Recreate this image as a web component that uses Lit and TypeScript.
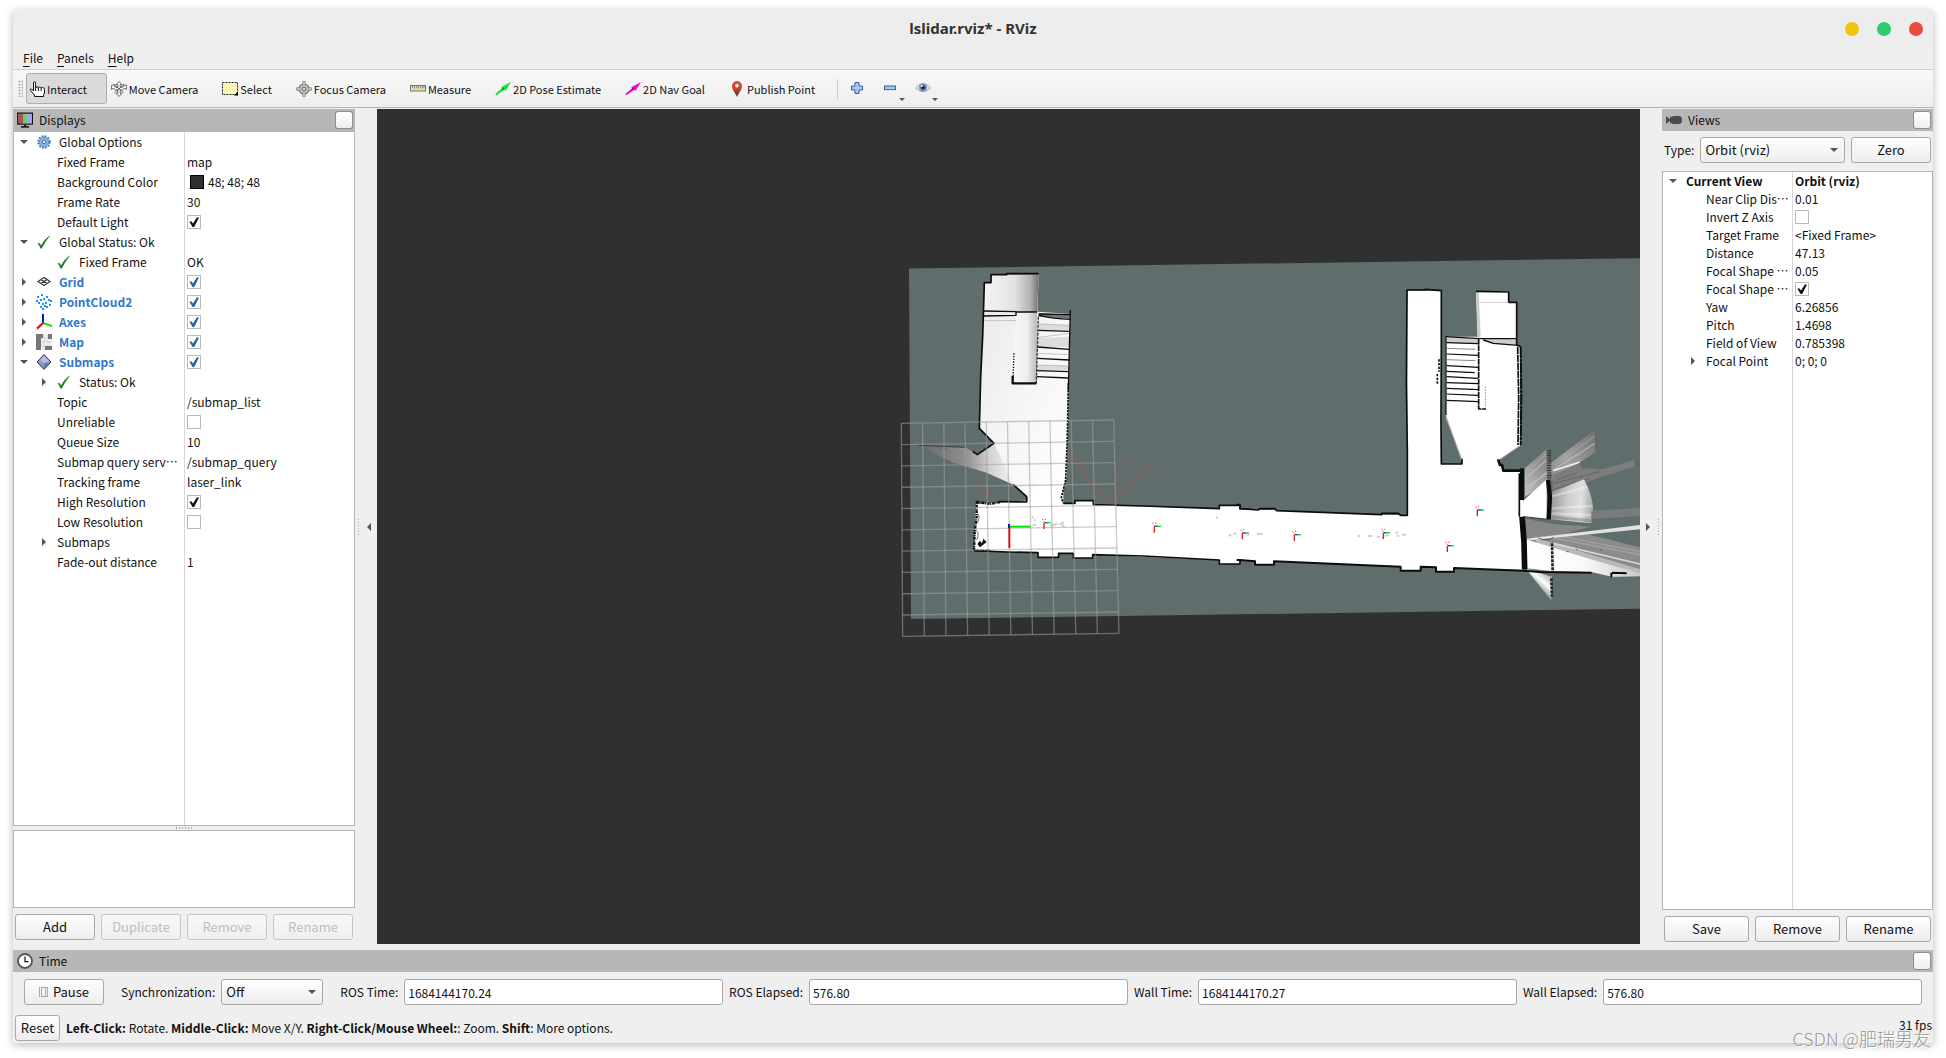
import { LitElement, html, css, svg, nothing } from "lit";
import { customElement, property } from "lit/decorators.js";

const sharedControls = css`
  * {
    box-sizing: border-box;
  }
  button,
  select,
  input {
    font: inherit;
    color: inherit;
    margin: 0;
  }
  .btn {
    height: 26px;
    padding: 0;
    border: 1px solid #a9a9a9;
    border-radius: 3px;
    background: linear-gradient(#fefefe, #ededed);
    color: #111;
    font-size: 13px;
    line-height: 20px;
  }
  .btn:disabled {
    border-color: #c6c6c6;
    color: #bebebe;
    background: linear-gradient(#f8f8f8, #efefef);
  }
  .select-wrap {
    position: relative;
    display: flex;
  }
  .select-wrap::after {
    content: "";
    position: absolute;
    right: 7px;
    top: 11px;
    border: 4px solid transparent;
    border-top-color: #555;
    border-bottom: 0;
    pointer-events: none;
  }
  .select-wrap select {
    appearance: none;
    flex: 1;
    height: 26px;
    padding: 0 20px 0 4px;
    border: 1px solid #a9a9a9;
    border-radius: 3px;
    background: linear-gradient(#fefefe, #ededed);
    font-size: 13px;
  }
`;

const ICONS: Record<string, unknown> = {
  hand: svg`<path d="M5.5 15.5 L5.5 14 L1.5 9.5 Q0.5 7.5 2.5 8 L4.5 10 L4.5 2 Q4.5 .6 5.5 .6 Q6.6 .6 6.6 2 L6.6 7 Q6.7 5.8 8 5.8 Q9.4 5.8 9.4 7.2 Q9.6 6 10.9 6 Q12.2 6 12.2 7.4 Q12.5 6.5 13.6 6.5 Q15.5 6.6 15.5 8.5 L15.5 12 L14.6 14 L14.6 15.5 Z" fill="#fff" stroke="#111"/><path d="M6.6 7V10M9.4 7V10M12.2 7.4V10" stroke="#111" fill="none"/>`,
  move: svg`<g fill="#fff" stroke="#555" stroke-width=".9"><path d="M8 .6L11 3.6H9.2V6.6Q11 6.6 12.6 5.4L12 3.6L15.8 4.6L15.4 8.4L13.8 7.4Q11.5 9 9.2 9.2V12.3H11L8 15.5L5 12.3H6.8V9.2Q4.5 9 2.2 7.4L.6 8.4L.2 4.6L4 3.6L3.4 5.4Q5 6.6 6.8 6.6V3.6H5Z"/><path d="M4 4.4Q8 8 12.5 11.5M12 4.4Q8 8 3.5 11.5" fill="none"/></g>`,
  select: svg`<rect x=".5" y="1.5" width="15" height="12" fill="#fdf6b6" stroke="#222" stroke-dasharray="2 1"/><path d="M16 10.5V14.5H12Z" fill="#000"/>`,
  focus: svg`<g fill="none" stroke="#777"><circle cx="8" cy="8" r="4.8" stroke-width="1.6"/><path d="M6.9 0H9.1V6.9H16V9.1H9.1V16H6.9V9.1H0V6.9H6.9Z" fill="#ddd" stroke-width=".8"/><circle cx="8" cy="8" r="1.8"/></g>`,
  measure: svg`<rect x=".5" y="4.5" width="15" height="5.5" fill="#e9dca6" stroke="#777"/><path d="M2.5 5v2M4.5 5v2.6M6.5 5v2M8.5 5v2.6M10.5 5v2M12.5 5v2.6M14 5v2" stroke="#777" stroke-width=".8"/>`,
  pose: svg`<path d="M.3 13 L7 7.3 L6.2 6.2 L16 1 L10.4 10 L9.3 8.8 L1.4 14.2Z" fill="#0fe52a"/><path d="M6.4 8.6L9.4 8.5L8 6.8Z" fill="#077a14"/>`,
  nav: svg`<path d="M.3 13 L7 7.3 L6.2 6.2 L16 1 L10.4 10 L9.3 8.8 L1.4 14.2Z" fill="#f10bd2"/><path d="M6.4 8.6L9.4 8.5L8 6.8Z" fill="#7a076c"/>`,
  pin: svg`<defs><linearGradient id="pin" x2="0" y2="1"><stop offset="0" stop-color="#e2552f"/><stop offset=".5" stop-color="#c0432a"/><stop offset="1" stop-color="#4f2d1c"/></linearGradient></defs><path d="M8 16 C6.5 12 3 9 3 5 A5 5 0 0 1 13 5 C13 9 9.5 12 8 16Z" fill="url(#pin)"/><circle cx="8" cy="4.8" r="1.8" fill="#fff"/>`,
  plus: svg`<path d="M6 2.5H10V6H13.5V10H10V13.5H6V10H2.5V6H6Z" fill="#a9c5e8" stroke="#3465a4"/>`,
  minus: svg`<rect x="2.5" y="6" width="11" height="3.6" fill="#a9c5e8" stroke="#3465a4"/>`,
  eye: svg`<path d="M.5 8 Q8 -1 15.5 8 Q8 15.5 .5 8Z" fill="#e6e6e6" stroke="#aaa"/><circle cx="8" cy="7.6" r="4" fill="#7d8bc0"/><circle cx="8" cy="7.6" r="2" fill="#1b2244"/><circle cx="6.8" cy="6" r="1" fill="#fff"/>`,
  monitor: svg`<rect x=".8" y="1.2" width="14.6" height="10.8" fill="#ddd" stroke="#111" stroke-width="1.4"/><rect x="1.4" y="1.8" width="4.6" height="9.6" fill="#a55757"/><rect x="6" y="1.8" width="4.6" height="9.6" fill="#73c677"/><rect x="10.6" y="1.8" width="4.2" height="9.6" fill="#a6a4e6"/><path d="M7 12.5h2.2v1.6h2.8v1.6H4v-1.6h3z" fill="#222"/>`,
  camera: svg`<path d="M0 4L4 7.3V4.5H5V5.5Q6 4 8 4H13Q16 4 16 8Q16 12 13 12H8Q6 12 5 10.5V11.5H4V8.7L0 12Z" fill="#4c4c4c"/>`,
  clock: svg`<circle cx="8" cy="8" r="7" fill="#fff" stroke="#555" stroke-width="1.8"/><path d="M8 3.5V8.6H11.5" fill="none" stroke="#111" stroke-width="1.2"/>`,
  gear: svg`<circle cx="8" cy="8" r="5.8" fill="none" stroke="#3f73b5" stroke-width="1.8" stroke-dasharray="1.8 1.24"/><circle cx="8" cy="8" r="4.7" fill="#8fb4e0" stroke="#5a89c6"/><circle cx="8" cy="8" r="1.8" fill="#dce8f7" stroke="#3f73b5"/>`,
  check: svg`<path d="M1.5 9.6 Q3.6 8 5 11.5 Q8.5 5 14.6 1 Q9.2 7.5 5.8 14.4 L4.4 14.4 Q3.5 11 1.5 9.6Z" fill="#1f7a25"/>`,
  grid: svg`<path d="M2 7.5L8 3.5L14 7.5L8 11.5ZM4.8 5.5L11 9.5M11 5.5L4.8 9.5" fill="none" stroke="#3c3c3c" stroke-width="1.3"/>`,
  cloud: svg`<g fill="#1e90ff">${[[5, 0], [1, 2], [10, 2], [0, 6], [4, 5], [7, 4], [12, 5], [14, 6], [2, 8], [6, 9], [9, 8], [13, 10], [4, 12], [8, 11], [6, 14], [10, 12]].map(([x, y]) => svg`<rect x=${x} y=${y} width="2" height="2"/>`)}</g>`,
  axes: svg`<path d="M7 9V0" stroke="#0b12d8" stroke-width="2"/><path d="M7 9L16 12" stroke="#10e010" stroke-width="2"/><path d="M7 9L1 14.6" stroke="#e01010" stroke-width="2.2"/>`,
  map: svg`<rect width="16" height="16" fill="#f2f2f2"/><path d="M0 4H16M0 8H16M0 12H16M4 0V16M8 0V16M12 0V16" stroke="#c4c4c4" stroke-width=".6"/><path d="M0 0H7V4H5V16H0ZM12 0H16V5H12ZM9 12H16V16H9Z" fill="#777"/>`,
  diamond: svg`<path d="M8 .6L15 8L8 15.4L1 8Z" fill="#8b9ac2" stroke="#27304f"/><path d="M8 1.5L13.8 8L8 9.4L4 6Z" fill="#b3bedb"/><path d="M8 14.5V9L14 8Z" fill="#6a7bab"/>`,
};

const icon = (name: string) =>
  html`<svg class="icon" viewBox="0 0 16 16" width="16" height="16" aria-hidden="true">${ICONS[name]}</svg>`;

interface Row {
  depth: number;
  label: string;
  arrow?: "open" | "closed";
  icon?: string;
  value?: string;
  check?: boolean;
  swatch?: boolean;
  tone?: "display" | "strong";
}

const DISPLAY_ROWS: Row[] = [
  { depth: 0, label: "Global Options", arrow: "open", icon: "gear" },
  { depth: 1, label: "Fixed Frame", value: "map" },
  { depth: 1, label: "Background Color", value: "48; 48; 48", swatch: true },
  { depth: 1, label: "Frame Rate", value: "30" },
  { depth: 1, label: "Default Light", check: true },
  { depth: 0, label: "Global Status: Ok", arrow: "open", icon: "check" },
  { depth: 1, label: "Fixed Frame", icon: "check", value: "OK" },
  { depth: 0, label: "Grid", arrow: "closed", icon: "grid", check: true, tone: "display" },
  { depth: 0, label: "PointCloud2", arrow: "closed", icon: "cloud", check: true, tone: "display" },
  { depth: 0, label: "Axes", arrow: "closed", icon: "axes", check: true, tone: "display" },
  { depth: 0, label: "Map", arrow: "closed", icon: "map", check: true, tone: "display" },
  { depth: 0, label: "Submaps", arrow: "open", icon: "diamond", check: true, tone: "display" },
  { depth: 1, label: "Status: Ok", arrow: "closed", icon: "check" },
  { depth: 1, label: "Topic", value: "/submap_list" },
  { depth: 1, label: "Unreliable", check: false },
  { depth: 1, label: "Queue Size", value: "10" },
  { depth: 1, label: "Submap query service", value: "/submap_query" },
  { depth: 1, label: "Tracking frame", value: "laser_link" },
  { depth: 1, label: "High Resolution", check: true },
  { depth: 1, label: "Low Resolution", check: false },
  { depth: 1, label: "Submaps", arrow: "closed" },
  { depth: 1, label: "Fade-out distance", value: "1" },
];

const VIEW_ROWS: Row[] = [
  { depth: 0, label: "Current View", arrow: "open", value: "Orbit (rviz)", tone: "strong" },
  { depth: 1, label: "Near Clip Distance", value: "0.01" },
  { depth: 1, label: "Invert Z Axis", check: false },
  { depth: 1, label: "Target Frame", value: "<Fixed Frame>" },
  { depth: 1, label: "Distance", value: "47.13" },
  { depth: 1, label: "Focal Shape Size", value: "0.05" },
  { depth: 1, label: "Focal Shape Fixed Size", check: true },
  { depth: 1, label: "Yaw", value: "6.26856" },
  { depth: 1, label: "Pitch", value: "1.4698" },
  { depth: 1, label: "Field of View", value: "0.785398" },
  { depth: 1, label: "Focal Point", arrow: "closed", value: "0; 0; 0" },
];

@customElement("property-tree")
class PropertyTree extends LitElement {
  @property({ attribute: false }) rows: Row[] = [];
  @property() kind = "displays";

  static styles = [
    sharedControls,
    css`
      :host {
        display: flex;
        flex-direction: column;
        background: #fff;
        border: 1px solid #b4b4b4;
        overflow: hidden;
      }
      .tree {
        --row: 20px;
        --name: 171px;
        --start: 2px;
        --end: 6px;
        flex: 1;
        display: flex;
        flex-direction: column;
        background: linear-gradient(#d8d8d8, #d8d8d8) calc(var(--name) - 1px) 0 / 1px 100% no-repeat;
      }
      .views {
        --row: 18px;
        --name: 130px;
        --end: 3px;
      }
      .row {
        display: grid;
        grid-template-columns: var(--name) 1fr;
        height: var(--row);
        align-items: center;
        line-height: var(--row);
      }
      .name {
        display: flex;
        align-items: center;
        min-width: 0;
        padding: 0 var(--end) 0 var(--start);
      }
      .depth1 {
        padding-left: calc(var(--start) + 20px);
      }
      .twist {
        flex: none;
        width: 20px;
        height: 16px;
        display: flex;
        align-items: center;
        padding-left: 4px;
      }
      .open::before,
      .closed::before {
        content: "";
        border: 4px solid transparent;
      }
      .open::before {
        border-top-color: #555;
        border-bottom: 0;
      }
      .closed::before {
        margin-left: 2px;
        border-left-color: #555;
        border-right: 0;
      }
      .icon {
        flex: none;
        margin-right: 7px;
      }
      .text {
        overflow: hidden;
        text-overflow: ellipsis;
        white-space: nowrap;
      }
      .plain {
        padding-left: 1px;
      }
      .value {
        display: flex;
        align-items: center;
        padding-left: 2px;
        white-space: nowrap;
      }
      .display .text {
        color: #3577c8;
        font-weight: 700;
      }
      .strong {
        font-weight: 700;
      }
      .swatch {
        width: 14px;
        height: 14px;
        margin: 0 4px 0 3px;
        background: #303030;
        border: 1px solid #000;
      }
      .box {
        appearance: none;
        width: 14px;
        height: 14px;
        border: 1px solid #b9b9b9;
        background: #fff;
        display: grid;
        place-items: center;
      }
      .box:checked::before {
        content: "";
        width: 10px;
        height: 10px;
        background: #111;
        clip-path: polygon(4% 48%, 22% 42%, 40% 66%, 78% 4%, 100% 4%, 52% 100%, 36% 100%);
      }
      .display .box:checked::before {
        background: #1f63ae;
      }
    `,
  ];

  render() {
    return html`<div class="tree ${this.kind}" role="tree">
      ${this.rows.map(
        (r, i) => html`<div class="row ${r.tone ?? ""}" role="treeitem">
          <div class="name depth${r.depth}">
            <span class="twist ${r.arrow ?? ""}"></span>
            ${r.icon ? icon(r.icon) : nothing}
            <label class="text ${r.icon ? "" : "plain"}" for="p${i}">${r.label}</label>
          </div>
          <div class="value">
            ${r.check === undefined
              ? nothing
              : html`<input id="p${i}" class="box" type="checkbox" .checked=${r.check} />`}
            ${r.swatch ? html`<span class="swatch"></span>` : nothing}${r.value ?? nothing}
          </div>
        </div>`,
      )}
    </div>`;
  }
}

const AXES_LEFT = [[462, 818], [793, 829], [1057, 849]];
const AXES_RIGHT = [[163, 854], [430, 848], [622, 887], [712, 780]];

const marker = ([x, y]: number[]) => svg`<g transform="translate(${x} ${y})">
  <path d="M0 0V19" stroke="#e01c1c" stroke-width="4"/>
  <path d="M2 0H12" stroke="#1b2bd0" stroke-width="4"/>
  <path d="M8 0H20" stroke="#12d812" stroke-width="4"/>
  <path d="M-6 -9h4M2 -10h4M-2 -3h4" stroke="#e55" stroke-width="3"/>
</g>`;

@customElement("map-view")
class MapView extends LitElement {
  static styles = css`
    :host {
      display: block;
      background: #303030;
      overflow: hidden;
      position: relative;
    }
    .scene {
      position: absolute;
      inset: 0;
      width: 100%;
      height: 100%;
    }
  `;

  render() {
    const cols = Array.from({ length: 11 }, (_, i) => i);
    return html`<svg class="scene" viewBox="377 109 1263 836" preserveAspectRatio="xMinYMin slice" role="img" aria-label="Map">
      <defs>
        <linearGradient id="tower" x1="0" x2="1" y1="0" y2="0">
          <stop offset="0" stop-color="#f4f4f4" /><stop offset=".55" stop-color="#e3e3e3" />
          <stop offset=".85" stop-color="#b2b2b2" /><stop offset="1" stop-color="#717171" />
        </linearGradient>
        <linearGradient id="room" x1="0" y1="0" x2="1" y2="1">
          <stop offset="0" stop-color="#e9e9e9" /><stop offset=".5" stop-color="#f5f5f5" /><stop offset="1" stop-color="#fff" />
        </linearGradient>
        <linearGradient id="well" x1="0" x2="1" y1="0" y2="0">
          <stop offset="0" stop-color="#f8f8f8" /><stop offset=".6" stop-color="#eee" /><stop offset="1" stop-color="#b9b9b9" />
        </linearGradient>
        <linearGradient id="beam" gradientUnits="userSpaceOnUse" x1="80" y1="620" x2="370" y2="600">
          <stop offset="0" stop-color="#666" /><stop offset=".5" stop-color="#8e8e8e" />
          <stop offset=".75" stop-color="#d2d2d2" /><stop offset="1" stop-color="#f6f6f6" />
        </linearGradient>
        <linearGradient id="fan" gradientUnits="userSpaceOnUse" x1="155" y1="300" x2="282" y2="310">
          <stop offset="0" stop-color="#9a9a9a" /><stop offset=".4" stop-color="#cfcfcf" />
          <stop offset=".7" stop-color="#e0e0e0" /><stop offset="1" stop-color="#9da2a1" />
        </linearGradient>
        <linearGradient id="ray" gradientUnits="userSpaceOnUse" x1="75" y1="270" x2="290" y2="120">
          <stop offset="0" stop-color="#bdbdbd" /><stop offset=".35" stop-color="#8a8a8a" />
          <stop offset=".6" stop-color="#a2a2a2" /><stop offset="1" stop-color="#767676" />
        </linearGradient>
        <linearGradient id="low" gradientUnits="userSpaceOnUse" x1="80" y1="0" x2="420" y2="0">
          <stop offset="0" stop-color="#fff" /><stop offset=".5" stop-color="#fafafa" /><stop offset="1" stop-color="#c8c8c8" />
        </linearGradient>
        <linearGradient id="flap" gradientUnits="userSpaceOnUse" x1="105" y1="560" x2="140" y2="520">
          <stop offset="0" stop-color="#8a8a8a" /><stop offset=".5" stop-color="#fff" /><stop offset="1" stop-color="#b5b5b5" />
        </linearGradient>
      </defs>

      <path d="M909 268.5L1650 258V608.5L911 619Z" fill="#5f6e6c" />

      <g transform="translate(890 250) scale(.33333)">
        <g fill="#6f6868">
          <path d="M650 762L532 622L540 592L560 622L652 745Z" />
          <path d="M652 760L692 620H702L664 745L708 618H716L672 735L788 624L797 629L690 745L820 626L828 634L670 762Z" fill-opacity=".85" />
          <path d="M252 682L262 684L325 750H305L250 720V708L290 730Z" />
        </g>
        <path d="M80 584L225 592L262 614L312 580L450 640L410 740L370 704L290 668L190 638Z" fill="url(#beam)" />
        <path d="M284 98L304 98V74H446L442 185L541 192L535 460L530 680L515 745H410V738L370 704L340 640L312 580L268 535L272 380L281 196Z" fill="url(#room)" />
        <path d="M284 98L304 98V74H446L441 188L282 184Z" fill="url(#tower)" />
        <path d="M380 186H441V402H367L372 310Z" fill="url(#well)" />
        <path d="M446 190L541 194V206L446 200Z" fill="#777" />
        <path d="M446 222L538 226V240L446 240ZM445 264L537 260V290L443 292ZM443 345L536 348V360H443Z" fill="#dcdcdc" />
        <path d="M258 762L410 752L440 700H520V758L555 762V752H610V764L988 776V766H1050V778L1060 780V930H1050V942H988V930L610 914V924H550V910H506V922H444V908L252 902Z" fill="#fff" />
        <g fill="none" stroke="#0c0c0c" stroke-width="5" stroke-linejoin="round">
          <path d="M268 538L272 380L278 260L283 98H303V74H350V71H446" />
          <path d="M282 183L380 185M282 198L378 196V186H441" stroke-width="4" />
          <path d="M446 192L541 194M446 196Q490 206 541 208M446 241L540 244M443 291L538 298M443 325L538 330M441 362L537 365M440 380L534 384" stroke-width="4" />
          <path d="M445 200L439 400" stroke="#333" stroke-width="4" stroke-dasharray="9 3" />
          <path d="M439 400H368V378" stroke-width="7" />
          <path d="M372 310L369 385" stroke-width="4" stroke-dasharray="4 4" />
          <path d="M541 180L538 300L535 420" stroke-width="4" />
          <path d="M535 400L532 560L527 690L514 742L520 760" stroke-dasharray="7 3" />
          <path d="M268 535L312 580L262 614L248 604M370 704L410 740V756L330 755" />
          <path d="M330 756L300 762L260 756V800L254 850L252 902H300" stroke-width="7" stroke-dasharray="8 3 3 2" />
          <path d="M85 586L225 592" stroke="#3b3b3b" stroke-width="3" />
          <path d="M145 590L155 600M160 592L172 602" stroke="#444" stroke-width="2" />
          <path d="M520 760H555V752H610V764L760 768L988 776V766H1050V778H1080" />
          <path d="M252 902L350 906L444 908V922H506V910H550V924H608V914L760 918L988 930V942H1050V930H1080" />
          <path d="M282 212H378M447 222L538 226M447 262L537 250M443 310L537 314M443 345L537 348" stroke="#aaa" stroke-width="2" />
        </g>
        <path d="M262 882L270 872L276 880L280 866L290 876L270 892Z" fill="#111" />
        <path d="M262 790Q272 800 262 820M258 840Q270 850 260 870" fill="none" stroke="#333" stroke-width="2" />
        <path d="M425 800l6 5M432 812l6-2M428 826l10-3M480 828l12-4M492 826l10-6M508 824l12-4M512 818h10M516 828h8M1016 858l8-4M1030 852l8-2M980 800l2 6" stroke="#d2d2d2" stroke-width="6" />
      </g>

      <g transform="translate(1500 400) scale(.33333)">
        <path d="M75 205L142 145L148 192L285 90L289 155L160 238L75 290Z" fill="url(#ray)" />
        <path d="M76 235L140 180M76 262L285 130M90 262L140 215" stroke="#c4c4c4" stroke-width="5" opacity=".6" />
        <path d="M76 222L140 160M150 208L284 108" stroke="#b0b0b0" stroke-width="4" opacity=".5" />
        <path d="M158 225L242 188L250 205L310 208L408 178V198L158 278Z" fill="#7d7d7d" />
        <path d="M160 212L240 186" stroke="#eee" stroke-width="5" />
        <path d="M160 250L300 215M170 240L230 218M162 268L270 235" stroke="#5a5a5a" stroke-width="2" />
        <path d="M152 278L252 238Q280 290 279 330L274 370L150 358Z" fill="url(#fan)" />
        <path d="M155 290L262 260M155 340L276 345M155 325L278 318" stroke="#fff" stroke-width="7" opacity=".35" />
        <path d="M155 352L276 362" stroke="#858585" stroke-width="9" opacity=".6" />
        <path d="M274 332L420 324V348L274 357Z" fill="#7b7b7b" />
        <path d="M76 356L160 372L270 380L200 400L80 418Z" fill="#858686" />
        <path d="M78 418L150 402L250 400L420 442V530L335 532L330 520L160 515L80 508Z" fill="#8b8b8b" />
        <path d="M100 412L420 508V522L120 440Z" fill="#b9b9b9" />
        <path d="M150 412L420 464M180 408L420 455" stroke="#9e9e9e" stroke-width="5" />
        <path d="M160 430L420 492" stroke="#d9d9d9" stroke-width="5" />
        <path d="M78 416L420 375V388L90 421Z" fill="#e2e2e2" />
        <path d="M78 418L150 440L300 486L420 520V528L335 530L275 516L160 514L80 505Z" fill="url(#low)" />
        <path d="M115 414Q140 426 162 412M200 455h6M228 448h5M300 450h4" fill="none" stroke="#333" stroke-width="2" />
        <path d="M78 506L156 530L154 602Z" fill="url(#flap)" />
        <path d="M72 300L140 238V358L62 350V320Z" fill="#fff" />
      </g>

      <g transform="translate(1240 250) scale(.33333)">
        <path d="M-10 778L55 780H105L425 794L502 796V122H604V642H666V628L618 505V260H714L708 124H806V156H830V284L840 290V588L776 630L790 660L850 664V960L642 955V966H585V952H542V962H482V950L102 934V944H45V932H-10Z" fill="#fff" />
        <path d="M618 262L715 266L716 282L618 278ZM730 268L830 268V285L760 280Z" fill="#ccc" />
        <path d="M708 126H716L722 262H712Z" fill="#ccc" />
        <g fill="none" stroke="#0c0c0c" stroke-width="5" stroke-linejoin="round">
          <path d="M-10 764H0V776L55 780L60 776H105L110 782L425 794V790H475L482 796H502V600L499 400L501 120H556V118L604 122V260L603 520L604 642H666V626" />
          <path d="M708 124L806 126V157H830V284L842 290" />
          <path d="M833 290L836 440L834 585" stroke-width="5" stroke-dasharray="22 2" />
          <path d="M842 290L844 440L842 585" stroke-width="6" stroke-dasharray="34 2 9 2" />
          <path d="M714 157H806" stroke="#bbb" stroke-width="2" />
          <path d="M616 260L720 266H830M730 270L760 280L835 286" stroke-width="4" />
          <path d="M618 262V495" stroke="#222" stroke-width="4" />
          <path d="M618 498L664 628M838 588L780 628" stroke="#aaa" stroke-width="3" />
          <path d="M620 278L714 281M620 312L716 316M620 347L716 352M620 364L704 368M620 380L714 385M620 398L716 401M620 415L716 419M620 432L714 436M620 451L716 455" stroke-width="3.5" />
          <path d="M620 295L706 298M620 329L706 332" stroke="#888" stroke-width="3" />
          <path d="M716 266V477H738" stroke-dasharray="18 2" />
          <path d="M736 410V475" stroke="#555" stroke-width="3" stroke-dasharray="3 6" />
          <path d="M597 328V365M592 372V405" stroke-width="5" stroke-dasharray="7 4" />
          <path d="M774 628L780 645H786L790 662H850" stroke-width="8" />
          <path d="M846 655V750" stroke-width="12" />
          <path d="M838 670V800" stroke-width="5" />
          <path d="M846 800L852 875L854 958" stroke-width="17" />
          <path d="M926 600L928 690" stroke="#3a3a3a" stroke-width="14" stroke-dasharray="3 2" />
          <path d="M924 690L930 740L926 808" stroke-width="13" />
          <path d="M850 800L925 808" stroke="#333" stroke-width="3" />
          <path d="M936 880L938 965M934 985L936 1040" stroke="#222" stroke-width="8" stroke-dasharray="9 3" />
          <path d="M1068 540V604M1020 638L1028 655M1186 628V650" stroke="#666" stroke-width="5" />
          <path d="M-10 930H0L45 934V944H102V934L482 950V962H542V950L588 952V965H642V954L850 962L900 966L1055 968M1114 968V982M1116 968L1160 970" stroke-width="6" />
        </g>
        <path d="M20 856l8-2M50 852h18M352 858h8M385 858h12M410 860h10M434 858l14-3M466 850l8-4M470 858h8M486 854h12" stroke="#d2d2d2" stroke-width="6" />
        ${AXES_RIGHT.map(marker)}
      </g>

      <g transform="translate(890 250) scale(.33333)">
        <g stroke="#a0a0a0" stroke-opacity=".55" stroke-width="4" fill="none">
          ${cols.map((i) => {
            const t = i / 10;
            return svg`<path d="M${34 + 637 * t} ${520 - 10 * t}L${38 + 649 * t} ${1159 - 9 * t}"/>
              <path d="M${34 + 4 * t} ${520 + 639 * t}L${671 + 16 * t} ${510 + 640 * t}"/>`;
          })}
        </g>
        ${AXES_LEFT.map(marker)}
        <path d="M358 832V894" stroke="#e01010" stroke-width="6" />
        <path d="M360 830H422" stroke="#05e505" stroke-width="6" />
        <path d="M357 822V834" stroke="#0a14d0" stroke-width="6" />
      </g>
    </svg>`;
  }
}

const TOOLS = [
  ["hand", "Interact"],
  ["move", "Move Camera"],
  ["select", "Select"],
  ["focus", "Focus Camera"],
  ["measure", "Measure"],
  ["pose", "2D Pose Estimate"],
  ["nav", "2D Nav Goal"],
  ["pin", "Publish Point"],
];

const TIMES = [
  ["ROS Time:", "1684144170.24"],
  ["ROS Elapsed:", "576.80"],
  ["Wall Time:", "1684144170.27"],
  ["Wall Elapsed:", "576.80"],
];

@customElement("app-root")
class AppRoot extends LitElement {
  static styles = [
    sharedControls,
    css`
      :host {
        display: block;
        min-height: 100vh;
        box-sizing: border-box;
        padding: 10px 13px 15px;
        background: #fff;
        color: #111;
        font: 12px/20px "Noto Sans CJK SC", "Noto Sans", sans-serif;
      }
      .window {
        position: relative;
        display: flex;
        flex-direction: column;
        height: calc(100vh - 25px);
        background: #efefef;
        border-radius: 4px 4px 0 0;
        box-shadow: 0 2px 9px rgba(0, 0, 0, 0.28);
      }
      .titlebar {
        display: grid;
        grid-template-columns: 1fr auto 1fr;
        align-items: center;
        height: 36px;
        padding: 2px 10px 0;
        background: #ededed;
        border-radius: 4px 4px 0 0;
        flex: none;
      }
      .title {
        grid-column: 2;
        margin: 0;
        padding-bottom: 2px;
        font: 700 15px/20px "Noto Sans", sans-serif;
        color: #333;
      }
      .dots {
        display: flex;
        justify-content: flex-end;
        gap: 18px;
      }
      .dot {
        width: 14px;
        height: 14px;
        padding: 0;
        border: 0;
        border-radius: 50%;
      }
      .min { background: #f1c40f; }
      .max { background: #2ecc71; }
      .close { background: #e84c3d; }
      .menubar {
        display: flex;
        gap: 14px;
        height: 24px;
        padding: 0 10px;
        border-bottom: 1px solid #cfcfcf;
        flex: none;
      }
      .menubar a {
        color: inherit;
        text-decoration: none;
        line-height: 24px;
      }
      .menubar u {
        text-underline-offset: 3px;
      }
      .toolbar {
        display: flex;
        align-items: center;
        height: 38px;
        padding-left: 5px;
        background: linear-gradient(#f8f8f8, #eee);
        border-bottom: 1px solid #b4b4b4;
        flex: none;
      }
      .grip {
        width: 5px;
        height: 17px;
        margin-right: 3px;
        background: radial-gradient(#b5b5b5 45%, transparent 50%) 0 0 / 3px 3px;
      }
      .tool {
        display: flex;
        align-items: center;
        gap: 2px;
        height: 31px;
        margin-right: 1px;
        padding: 0 19px 0 2px;
        border: 1px solid transparent;
        border-radius: 3px;
        background: none;
        font-size: 11px;
        white-space: nowrap;
      }
      .active {
        background: #dadada;
        border-color: #adadad;
      }
      .sep {
        width: 1px;
        height: 20px;
        margin: 0 11px 0 1px;
        background: #ccc;
      }
      .mini {
        display: flex;
        position: relative;
        width: 33px;
        height: 24px;
        padding: 3px 0;
        border: 0;
        background: none;
      }
      .more::after {
        content: "";
        position: absolute;
        left: 17px;
        bottom: 0;
        border: 3px solid transparent;
        border-top-color: #555;
        border-bottom: 0;
      }
      .main {
        flex: 1;
        min-height: 0;
        display: grid;
        grid-template-columns: 342px 22px minmax(0, 1fr) 22px 271px;
        padding-top: 1px;
      }
      .dock {
        display: flex;
        flex-direction: column;
        min-height: 0;
      }
      .dock-head {
        display: flex;
        align-items: center;
        gap: 6px;
        flex: none;
        height: 22px;
        padding: 0 2px 0 4px;
        background: #b7b7b7;
      }
      .dock-head h2 {
        flex: 1;
        margin: 0;
        font: inherit;
      }
      .float {
        width: 18px;
        height: 18px;
        padding: 0;
        border: 1px solid #8d8d8d;
        border-radius: 3px;
        background: linear-gradient(#fff, #eee);
      }
      property-tree {
        flex: 1;
        min-height: 0;
      }
      .hgrip {
        flex: none;
        width: 18px;
        height: 4px;
        margin: 0 auto;
        background: radial-gradient(#aaa 45%, transparent 50%) 0 0 / 3px 4px;
      }
      .help {
        flex: none;
        width: 100%;
        height: 78px;
        resize: none;
        border: 1px solid #b4b4b4;
        background: #fff;
      }
      .buttons {
        display: grid;
        grid-auto-flow: column;
        grid-auto-columns: 1fr;
        gap: 6px;
        padding: 6px 2px 4px;
      }
      .views .buttons {
        padding-bottom: 2px;
      }
      .view-type {
        display: grid;
        grid-template-columns: auto 1fr 80px;
        align-items: center;
        gap: 6px;
        padding: 6px 2px 8px;
      }
      .splitter {
        display: flex;
        align-items: center;
        justify-content: center;
        padding: 0;
        border: 0;
        background: none;
      }
      .splitter::before {
        content: "";
        border: 4px solid transparent;
      }
      .splitter::after {
        content: "";
        width: 1px;
        height: 16px;
        background: repeating-linear-gradient(#aaa 0 1px, transparent 1px 3px);
      }
      .to-left {
        flex-direction: row-reverse;
        gap: 8px;
        padding-right: 3px;
      }
      .to-left::before {
        border-right-color: #555;
        border-left: 0;
      }
      .to-right {
        gap: 8px;
        padding-left: 3px;
      }
      .to-right::before {
        border-left-color: #555;
        border-right: 0;
      }
      .time {
        margin-top: 6px;
        flex: none;
      }
      .time-row {
        display: flex;
        align-items: center;
        gap: 6px;
        padding: 7px 11px;
        white-space: nowrap;
      }
      .pause {
        width: 80px;
        margin-right: 11px;
      }
      .pause-icon {
        display: inline-block;
        width: 9px;
        height: 10px;
        margin-right: 5px;
        border: 1px solid #aaa;
        border-width: 1px 3px;
        border-style: solid double;
      }
      .sync {
        width: 102px;
        margin-right: 11px;
      }
      .field {
        flex: 1 1 0;
        min-width: 0;
        height: 26px;
        padding: 0 3px;
        border: 1px solid #a9a9a9;
        border-radius: 3px;
        background: #fff;
      }
      .status {
        display: flex;
        align-items: center;
        gap: 6px;
        flex: none;
        height: 31px;
        padding: 0 1px 0 2px;
      }
      .reset {
        width: 45px;
      }
      .fps {
        margin-left: auto;
        padding-bottom: 6px;
      }
      .mark {
        position: absolute;
        right: 2px;
        bottom: -8px;
        font-size: 18px;
        font-weight: 300;
        line-height: 26px;
        color: #999;
        text-shadow: 1px 1px 0 #fff;
      }
    `,
  ];

  render() {
    return html`<div class="window">
      <header class="titlebar">
        <h1 class="title">lslidar.rviz* - RViz</h1>
        <div class="dots">
          <button class="dot min" aria-label="Minimize"></button>
          <button class="dot max" aria-label="Maximize"></button>
          <button class="dot close" aria-label="Close"></button>
        </div>
      </header>
      <nav class="menubar">
        <a href="#file"><u>F</u>ile</a>
        <a href="#panels"><u>P</u>anels</a>
        <a href="#help"><u>H</u>elp</a>
      </nav>
      <div class="toolbar" role="toolbar">
        <span class="grip"></span>
        ${TOOLS.map(
          ([name, label], i) =>
            html`<button class="tool ${i === 0 ? "active" : ""}">${icon(name)}<span>${label}</span></button>`,
        )}
        <span class="sep"></span>
        <button class="mini" aria-label="Add tool">${icon("plus")}</button>
        <button class="mini more" aria-label="Remove tool">${icon("minus")}</button>
        <button class="mini more" aria-label="Tool visibility">${icon("eye")}</button>
      </div>
      <main class="main">
        <section class="dock">
          <div class="dock-head">${icon("monitor")}
            <h2>Displays</h2>
            <button class="float" aria-label="Float Displays"></button>
          </div>
          <property-tree .rows=${DISPLAY_ROWS}></property-tree>
          <div class="hgrip"></div>
          <textarea class="help" readonly aria-label="Description"></textarea>
          <div class="buttons">
            <button class="btn">Add</button>
            <button class="btn" disabled>Duplicate</button>
            <button class="btn" disabled>Remove</button>
            <button class="btn" disabled>Rename</button>
          </div>
        </section>
        <button class="splitter to-left" aria-label="Hide left panel"></button>
        <map-view></map-view>
        <button class="splitter to-right" aria-label="Hide right panel"></button>
        <section class="dock views">
          <div class="dock-head">${icon("camera")}
            <h2>Views</h2>
            <button class="float" aria-label="Float Views"></button>
          </div>
          <div class="view-type">
            <label for="type">Type:</label>
            <span class="select-wrap"><select id="type"><option>Orbit (rviz)</option></select></span>
            <button class="btn">Zero</button>
          </div>
          <property-tree kind="views" .rows=${VIEW_ROWS}></property-tree>
          <div class="buttons">
            <button class="btn">Save</button>
            <button class="btn">Remove</button>
            <button class="btn">Rename</button>
          </div>
        </section>
      </main>
      <section class="time">
        <div class="dock-head">${icon("clock")}
          <h2>Time</h2>
          <button class="float" aria-label="Float Time"></button>
        </div>
        <div class="time-row">
          <button class="btn pause"><span class="pause-icon"></span>Pause</button>
          <label for="sync">Synchronization:</label>
          <span class="select-wrap sync"><select id="sync"><option>Off</option></select></span>
          ${TIMES.map(
            ([label, value], i) => html`<label for="t${i}">${label}</label>
              <input class="field" id="t${i}" readonly .value=${value} />`,
          )}
        </div>
      </section>
      <footer class="status">
        <button class="btn reset">Reset</button>
        <span><b>Left-Click:</b> Rotate. <b>Middle-Click:</b> Move X/Y. <b>Right-Click/Mouse Wheel:</b>: Zoom. <b>Shift</b>: More options.</span>
        <span class="fps">31 fps</span>
      </footer>
      <span class="mark">CSDN @肥瑞男友</span>
    </div>`;
  }
}
